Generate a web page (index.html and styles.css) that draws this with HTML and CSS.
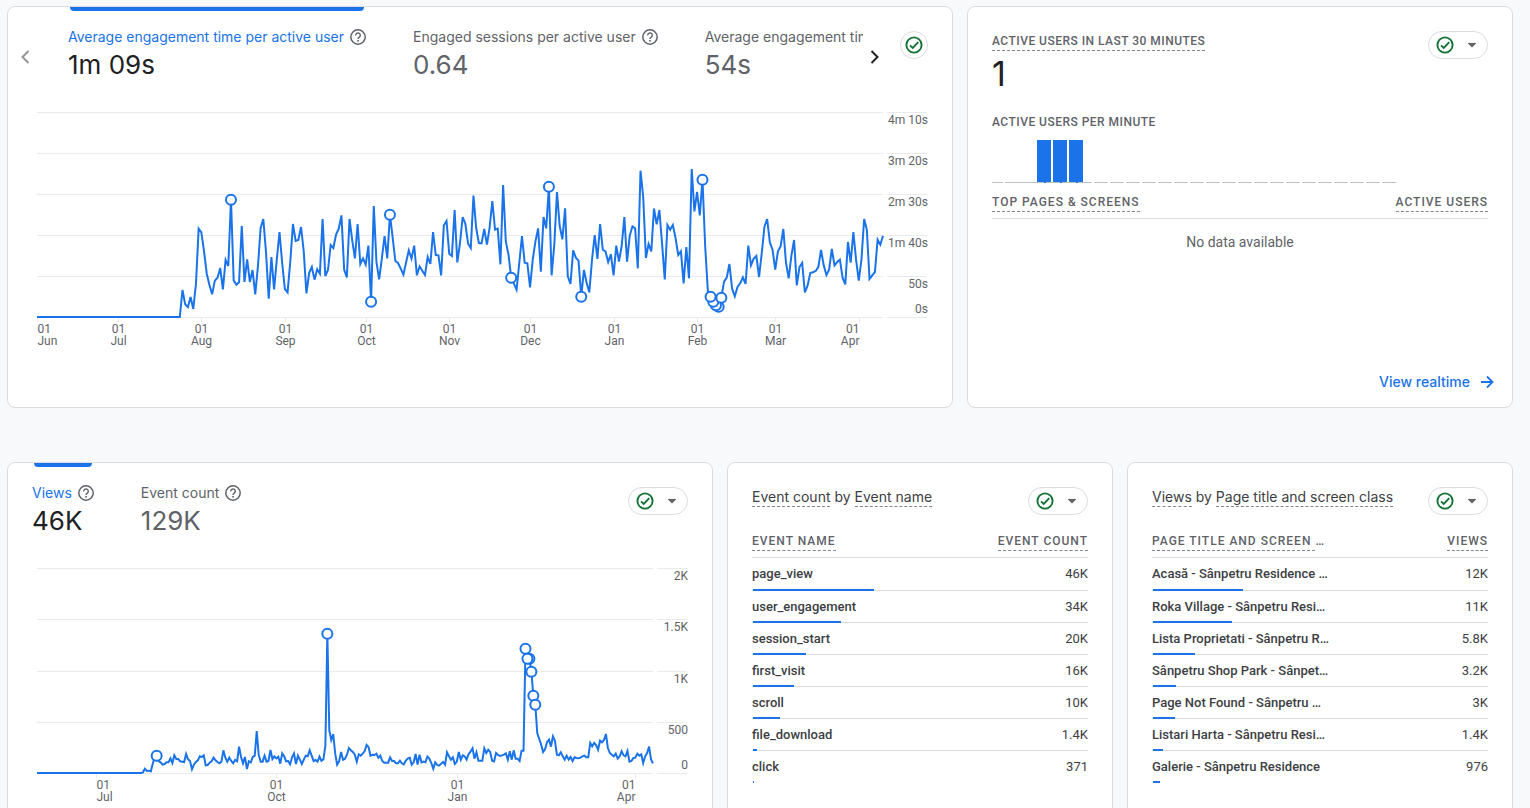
FILE: index.html
```html
<!DOCTYPE html>
<html lang="en">
<head>
    <meta charset="UTF-8">
    <meta name="viewport" content="width=device-width, initial-scale=1.0">
    <title>Analytics Home</title>
    <link rel="stylesheet" href="styles.css">
</head>
<body>

    <!-- shared icons -->
    <svg class="sprite" aria-hidden="true">
        <symbol id="icon-help" viewBox="0 0 16 16">
            <circle cx="8" cy="8" r="7.2" fill="none" stroke="currentColor" stroke-width="1.5"/>
            <path d="M5.7 6.4a2.3 2.3 0 1 1 3.7 1.7C8.6 8.7 8 9 8 10.1" fill="none" stroke="currentColor" stroke-width="1.4"/>
            <rect x="7.2" y="11" width="1.6" height="1.6" fill="currentColor"/>
        </symbol>
        <symbol id="icon-check" viewBox="0 0 18 18">
            <circle cx="9" cy="9" r="7.6" fill="none" stroke="currentColor" stroke-width="1.9"/>
            <path d="M5 9.4l2.7 2.6 5.6-5.8" fill="none" stroke="currentColor" stroke-width="1.9"/>
        </symbol>
        <symbol id="icon-caret" viewBox="0 0 10 5">
            <path d="M0.5 0h9L5 4.5z" fill="currentColor"/>
        </symbol>
        <symbol id="icon-prev" viewBox="0 0 10 14">
            <path d="M8.5 1L2.5 7l6 6" fill="none" stroke="currentColor" stroke-width="2"/>
        </symbol>
        <symbol id="icon-next" viewBox="0 0 10 14">
            <path d="M1.5 1l6 6-6 6" fill="none" stroke="currentColor" stroke-width="2"/>
        </symbol>
        <symbol id="icon-arrow" viewBox="0 0 14 14">
            <path d="M1 7h11M7 1.5L12.5 7 7 12.5" fill="none" stroke="currentColor" stroke-width="1.8"/>
        </symbol>
    </svg>

    <main class="dashboard">

        <section class="card card-engagement">
            <div class="card-top">
                <button class="scroll-btn prev" aria-label="Previous metrics" disabled><svg width="10" height="14"><use href="#icon-prev"/></svg></button>
                <div class="tabs">
                    <button class="tab active">
                        <span class="tab-label">Average engagement time per active user <svg class="help" width="16" height="16"><use href="#icon-help"/></svg></span>
                        <span class="tab-value">1m 09s</span>
                    </button>
                    <button class="tab">
                        <span class="tab-label">Engaged sessions per active user <svg class="help" width="16" height="16"><use href="#icon-help"/></svg></span>
                        <span class="tab-value">0.64</span>
                    </button>
                    <button class="tab">
                        <span class="tab-label">Average engagement time per session <svg class="help" width="16" height="16"><use href="#icon-help"/></svg></span>
                        <span class="tab-value">54s</span>
                    </button>
                </div>
                <button class="scroll-btn next" aria-label="Next metrics"><svg width="10" height="14"><use href="#icon-next"/></svg></button>
                <button class="status-btn round" aria-label="Data quality"><svg width="18" height="18"><use href="#icon-check"/></svg></button>
            </div>
            <svg class="chart" id="engagement-chart"></svg>
        </section>

        <section class="card card-realtime">
            <div class="card-head">
                <h2 class="overline"><span class="dashed">Active users in last 30 minutes</span></h2>
                <button class="status-btn" aria-label="Data quality"><svg width="18" height="18"><use href="#icon-check"/></svg><svg class="caret" width="10" height="5"><use href="#icon-caret"/></svg></button>
            </div>
            <div class="realtime-value">1</div>
            <h3 class="overline">Active users per minute</h3>
            <svg class="minutes" id="minutes-chart" width="405" height="44"></svg>
            <table class="data-table realtime-table">
                <thead>
                    <tr>
                        <th scope="col"><span class="dashed">Top pages &amp; screens</span></th>
                        <th scope="col"><span class="dashed">Active users</span></th>
                    </tr>
                </thead>
                <tbody>
                    <tr><td class="empty" colspan="2">No data available</td></tr>
                </tbody>
            </table>
            <a class="card-link" href="#">View realtime <svg width="14" height="14"><use href="#icon-arrow"/></svg></a>
        </section>

        <section class="card card-views">
            <div class="card-top">
                <div class="tabs">
                    <button class="tab active">
                        <span class="tab-label">Views <svg class="help" width="16" height="16"><use href="#icon-help"/></svg></span>
                        <span class="tab-value">46K</span>
                    </button>
                    <button class="tab">
                        <span class="tab-label">Event count <svg class="help" width="16" height="16"><use href="#icon-help"/></svg></span>
                        <span class="tab-value">129K</span>
                    </button>
                </div>
                <button class="status-btn" aria-label="Data quality"><svg width="18" height="18"><use href="#icon-check"/></svg><svg class="caret" width="10" height="5"><use href="#icon-caret"/></svg></button>
            </div>
            <svg class="chart" id="views-chart"></svg>
        </section>

        <section class="card card-list">
            <div class="card-head">
                <h2 class="card-title"><span class="dashed">Event count</span> by <span class="dashed">Event name</span></h2>
                <button class="status-btn" aria-label="Data quality"><svg width="18" height="18"><use href="#icon-check"/></svg><svg class="caret" width="10" height="5"><use href="#icon-caret"/></svg></button>
            </div>
            <table class="data-table">
                <thead>
                    <tr>
                        <th scope="col"><span class="dashed">Event name</span></th>
                        <th scope="col"><span class="dashed">Event count</span></th>
                    </tr>
                </thead>
                <tbody>
                    <tr><td>page_view<span class="bar" style="width: 36%"></span></td><td>46K</td></tr>
                    <tr><td>user_engagement<span class="bar" style="width: 26.2%"></span></td><td>34K</td></tr>
                    <tr><td>session_start<span class="bar" style="width: 15.8%"></span></td><td>20K</td></tr>
                    <tr><td>first_visit<span class="bar" style="width: 12.2%"></span></td><td>16K</td></tr>
                    <tr><td>scroll<span class="bar" style="width: 8%"></span></td><td>10K</td></tr>
                    <tr><td>file_download<span class="bar" style="width: 1.2%"></span></td><td>1.4K</td></tr>
                    <tr><td>click<span class="bar" style="width: 0.3%"></span></td><td>371</td></tr>
                </tbody>
            </table>
        </section>

        <section class="card card-list">
            <div class="card-head">
                <h2 class="card-title"><span class="dashed">Views</span> by <span class="dashed">Page title and screen class</span></h2>
                <button class="status-btn" aria-label="Data quality"><svg width="18" height="18"><use href="#icon-check"/></svg><svg class="caret" width="10" height="5"><use href="#icon-caret"/></svg></button>
            </div>
            <table class="data-table">
                <thead>
                    <tr>
                        <th scope="col"><span class="dashed">Page title and screen&nbsp;</span>…</th>
                        <th scope="col"><span class="dashed">Views</span></th>
                    </tr>
                </thead>
                <tbody>
                    <tr><td>Acasă - Sânpetru Residence …<span class="bar" style="width: 26.8%"></span></td><td>12K</td></tr>
                    <tr><td>Roka Village - Sânpetru Resi…<span class="bar" style="width: 23.5%"></span></td><td>11K</td></tr>
                    <tr><td>Lista Proprietati - Sânpetru R…<span class="bar" style="width: 12.5%"></span></td><td>5.8K</td></tr>
                    <tr><td>Sânpetru Shop Park - Sânpet…<span class="bar" style="width: 6.9%"></span></td><td>3.2K</td></tr>
                    <tr><td>Page Not Found - Sânpetru …<span class="bar" style="width: 6.5%"></span></td><td>3K</td></tr>
                    <tr><td>Listari Harta - Sânpetru Resi…<span class="bar" style="width: 3%"></span></td><td>1.4K</td></tr>
                    <tr><td>Galerie - Sânpetru Residence<span class="bar" style="width: 2.1%"></span></td><td>976</td></tr>
                </tbody>
            </table>
        </section>

    </main>

    <script src="charts.js"></script>
</body>
</html>
```
FILE: styles.css
```css
* {
    box-sizing: border-box;
}

body {
    margin: 0;
    height: 100vh;
    overflow: hidden;
    background-color: #f8f9fa;
    color: #202124;
    font-family: Roboto, "Liberation Sans", sans-serif;
}

button {
    font: inherit;
    color: inherit;
    background: none;
    border: none;
    padding: 0;
    cursor: pointer;
}

svg {
    display: block;
    flex: none;
}

.sprite {
    position: absolute;
    width: 0;
    height: 0;
}

.dashboard {
    display: grid;
    grid-template-columns: repeat(19, minmax(0, 1fr));
    column-gap: 14px;
    row-gap: 54px;
    height: 100%;
    padding: 6px 17px 0 7px;
    overflow: hidden auto;
    scrollbar-width: none;
}

.card {
    display: flex;
    flex-direction: column;
    min-height: 402px;
    padding: 0 24px;
    background-color: #fff;
    border: 1px solid #dadce0;
    border-radius: 8px;
}

.card-engagement {
    grid-column: span 12;
}

.card-realtime {
    grid-column: span 7;
}

.card-views {
    grid-column: span 9;
}

.card-list {
    grid-column: span 5;
}

/* metric tabs */
.card-top {
    display: flex;
    align-items: flex-start;
    height: 97px;
}

.tabs {
    display: flex;
    flex: 1;
    gap: 47px;
    overflow: hidden;
}

.tab {
    position: relative;
    flex: none;
    padding: 21px 0 0;
    color: #5f6368;
    font-family: "Google Sans", Inter, sans-serif;
    text-align: left;
}

.tab-label {
    display: flex;
    align-items: center;
    gap: 6px;
    font-size: 14px;
    line-height: 18px;
    white-space: nowrap;
}

.tab-value {
    display: block;
    font-size: 26px;
    line-height: 38px;
}

.tab.active {
    color: #202124;
}

.tab.active::before {
    content: "";
    position: absolute;
    top: 0;
    left: 2px;
    right: 2px;
    height: 4px;
    background-color: #1a73e8;
    border-radius: 0 0 4px 4px;
}

.tab.active .tab-label {
    color: #1a73e8;
}

.tab .help {
    color: #5f6368;
}

.scroll-btn {
    margin-top: 43px;
}

.scroll-btn.prev {
    margin-left: -12px;
    margin-right: 38px;
    color: #949699;
}

.scroll-btn.next {
    margin-left: 7px;
    margin-right: 20px;
    color: #202124;
}

.status-btn {
    display: flex;
    align-items: center;
    gap: 12px;
    flex: none;
    width: 60px;
    height: 28px;
    margin-top: 24px;
    padding-left: 7px;
    border: 1px solid #dadce0;
    border-radius: 14px;
    color: #137333;
}

.status-btn.round {
    justify-content: center;
    width: 28px;
    padding: 0;
}

.caret {
    margin-left: 1px;
    color: #5f6368;
}

/* line charts */
.chart {
    width: 100%;
    height: 260px;
    overflow: visible;
}

.chart text {
    fill: #5f6368;
    font-size: 12px;
}

.chart .grid {
    stroke: #e8eaed;
    stroke-width: 1;
}

.chart .series {
    fill: none;
    stroke: #1a73e8;
    stroke-width: 2;
}

.chart .marker {
    fill: #fff;
    stroke: #1a73e8;
    stroke-width: 2;
}

/* card headings */
.card-head {
    display: flex;
    justify-content: space-between;
    align-items: flex-start;
}

.card-title {
    margin: 25px 0 0;
    color: #3c4043;
    font-family: "Google Sans", Inter, sans-serif;
    font-size: 14px;
    font-weight: 400;
    line-height: 18px;
}

.overline {
    margin: 0;
    color: #5f6368;
    font-size: 12px;
    font-weight: 500;
    letter-spacing: 0.04em;
    line-height: 18px;
    text-transform: uppercase;
}

.card-head .overline {
    margin-top: 25px;
}

.dashed {
    display: inline-block;
    border-bottom: 1px dashed #80868b;
}

.realtime-value {
    margin-top: -5px;
    font-family: "Google Sans", Inter, sans-serif;
    font-size: 34px;
    line-height: 40px;
}

.realtime-value + .overline {
    margin-top: 19px;
}

.minutes {
    margin-top: 9px;
}

/* tables */
.data-table {
    width: 100%;
    margin-top: 17px;
    border-collapse: separate;
    border-spacing: 0;
}

.data-table tr {
    position: relative;
}

.data-table th {
    padding: 0 0 6px;
    border-bottom: 1px solid #dadce0;
    color: #5f6368;
    font-size: 12px;
    font-weight: 500;
    letter-spacing: 1px;
    line-height: 18px;
    text-align: left;
    text-transform: uppercase;
    white-space: nowrap;
}

.data-table td {
    height: 32px;
    padding: 0 0 1px;
    border-bottom: 1px solid #dadce0;
    color: #3c4043;
    font-size: 13px;
    font-weight: 500;
    white-space: nowrap;
}

.data-table tbody tr:first-child td {
    height: 33px;
}

.data-table th:last-child,
.data-table td:last-child {
    text-align: right;
}

.data-table td:last-child {
    font-weight: 400;
}

.data-table tbody tr:last-child td {
    border-bottom-color: transparent;
}

.bar {
    position: absolute;
    left: 1px;
    bottom: 0;
    height: 2px;
    background-color: #1a73e8;
}

.realtime-table {
    margin-top: 9px;
}

.realtime-table tbody tr:first-child .empty {
    height: 48px;
    color: #5f6368;
    font-size: 14px;
    text-align: center;
}

.card-link {
    display: flex;
    align-items: center;
    gap: 10px;
    align-self: flex-end;
    margin-top: auto;
    margin-right: -6px;
    margin-bottom: 16px;
    color: #1a73e8;
    font-family: "Google Sans", Inter, sans-serif;
    font-size: 14px;
    font-weight: 500;
    line-height: 18px;
    text-decoration: none;
}
```
FILE: charts.js
```js
const SVG_NS = 'http://www.w3.org/2000/svg';
const LAST_DAY = 314;
const FULL_SCALE = 615;
const PLOT_HEIGHT = 205;

// one value per day from 1 June, after the empty days at the start
const engagement = [
    0, 81, 38, 30, 60, 24, 99, 265, 254, 197, 130, 96, 68, 109, 118, 147, 83, 171, 153, 352,
    110, 97, 104, 273, 105, 173, 105, 141, 68, 152, 267, 294, 194, 55, 180, 83, 172, 255, 162, 84,
    74, 165, 279, 228, 231, 270, 197, 71, 132, 150, 112, 143, 130, 294, 123, 141, 216, 207, 247, 265,
    305, 142, 119, 294, 230, 176, 279, 159, 176, 157, 214, 46, 333, 164, 113, 176, 243, 176, 307, 239,
    168, 162, 145, 127, 164, 200, 175, 214, 125, 152, 139, 126, 180, 159, 255, 186, 185, 125, 275, 288,
    190, 183, 321, 164, 222, 300, 279, 220, 207, 364, 267, 222, 221, 264, 217, 269, 348, 262, 265, 158,
    396, 227, 187, 118, 100, 82, 162, 243, 163, 161, 89, 172, 227, 266, 136, 300, 266, 391, 125, 217,
    375, 273, 233, 326, 122, 99, 200, 178, 169, 61, 141, 102, 74, 172, 246, 174, 279, 202, 197, 165,
    188, 125, 214, 166, 213, 300, 166, 244, 272, 266, 146, 439, 360, 177, 219, 197, 325, 278, 321, 220,
    113, 276, 262, 276, 237, 186, 197, 101, 210, 116, 444, 317, 375, 305, 412, 212, 77, 61, 46, 35,
    31, 58, 106, 118, 159, 85, 62, 90, 101, 119, 99, 214, 155, 175, 183, 120, 192, 271, 294, 224,
    202, 142, 197, 212, 264, 162, 116, 184, 231, 95, 150, 162, 74, 94, 132, 134, 138, 150, 201, 155,
    126, 142, 204, 155, 165, 172, 118, 98, 225, 163, 255, 172, 109, 172, 294, 262, 114, 125, 135, 232,
    217, 244
];

const views = [
    2, 13, 6, 7, 5, 28, 48, 52, 36, 32, 25, 27, 32, 32, 44, 30, 53, 42, 42, 35,
    34, 33, 57, 41, 36, 11, 25, 33, 38, 50, 48, 53, 23, 24, 31, 35, 46, 38, 33, 29,
    34, 68, 46, 34, 46, 36, 29, 39, 35, 79, 48, 29, 48, 12, 35, 32, 48, 52, 126, 55,
    34, 34, 52, 34, 36, 69, 42, 50, 44, 49, 28, 59, 50, 35, 36, 26, 47, 59, 27, 52,
    40, 27, 40, 52, 50, 68, 52, 36, 39, 34, 49, 36, 41, 82, 418, 128, 99, 117, 58, 25,
    35, 63, 40, 43, 55, 75, 68, 63, 55, 34, 56, 52, 58, 65, 84, 78, 52, 55, 54, 58,
    46, 52, 36, 31, 31, 31, 47, 36, 36, 29, 29, 37, 29, 26, 37, 43, 46, 25, 32, 57,
    25, 55, 32, 34, 32, 49, 43, 30, 13, 32, 24, 22, 28, 33, 25, 62, 50, 40, 47, 27,
    34, 63, 40, 53, 50, 40, 57, 64, 74, 43, 62, 37, 37, 37, 74, 60, 70, 63, 37, 35,
    60, 54, 51, 53, 55, 59, 40, 65, 40, 68, 43, 43, 36, 67, 67, 373, 343, 343, 304, 232,
    205, 120, 102, 85, 63, 72, 93, 100, 79, 110, 97, 55, 53, 62, 50, 40, 52, 40, 48, 36,
    47, 45, 44, 46, 50, 52, 47, 47, 90, 80, 90, 84, 70, 97, 92, 99, 117, 75, 60, 55,
    50, 58, 43, 50, 65, 53, 50, 66, 34, 36, 45, 46, 58, 52, 56, 30, 50, 60, 79, 41,
    29
];

function add(parent, name, attrs, text) {
    const node = document.createElementNS(SVG_NS, name);
    for (const key in attrs) {
        node.setAttribute(key, attrs[key]);
    }
    if (text) {
        node.textContent = text;
    }
    parent.appendChild(node);
    return node;
}

function drawChart(id, options) {
    const svg = document.getElementById(id);
    svg.innerHTML = '';
    const width = svg.clientWidth;
    const left = 5;
    const top = 8;
    const right = width - options.axisWidth - 5;
    const base = top + PLOT_HEIGHT;
    const dayX = day => left + day * (right - left) / LAST_DAY;
    const valueY = value => base - value * PLOT_HEIGHT / FULL_SCALE;

    options.yLabels.forEach((label, i) => {
        const y = Math.round(top + i * PLOT_HEIGHT / (options.yLabels.length - 1)) + 0.5;
        const last = i === options.yLabels.length - 1;
        add(svg, 'line', { class: 'grid', x1: left, x2: right, y1: y, y2: y });
        add(svg, 'line', { class: 'grid', x1: right + 4, x2: width - 1, y1: y, y2: y });
        add(svg, 'text', { x: width, y: last ? y - 5 : y + 11, 'text-anchor': 'end' }, label);
    });

    options.xLabels.forEach(([day, month, anchor]) => {
        const x = Math.round(dayX(day)) + 0.5;
        add(svg, 'line', { class: 'grid', x1: x, x2: x, y1: base, y2: base + 5 });
        add(svg, 'text', { x: x, y: base + 16, 'text-anchor': anchor || 'middle' }, '01');
        add(svg, 'text', { x: x, y: base + 28, 'text-anchor': anchor || 'middle' }, month);
    });

    const padding = LAST_DAY + 1 - options.data.length;
    const values = new Array(padding).fill(0).concat(options.data);
    const points = values.map((value, day) => dayX(day) + ',' + valueY(value)).join(' ');
    add(svg, 'polyline', { class: 'series', points: points });

    options.markers.forEach(day => {
        add(svg, 'circle', { class: 'marker', cx: dayX(day), cy: valueY(values[day]), r: 5 });
    });
}

function drawMinutes() {
    const svg = document.getElementById('minutes-chart');
    add(svg, 'path', { d: 'M0 42.5h11M13 42.5h87', stroke: '#bdc1c6' });
    for (let x = 102; x < 400; x += 16) {
        add(svg, 'path', { d: 'M' + x + ' 42.5h14', stroke: '#bdc1c6' });
    }
    [45, 61, 77].forEach(x => {
        add(svg, 'rect', { x: x, y: 0, width: 14, height: 42, fill: '#1a73e8' });
        add(svg, 'rect', { x: x + 7, y: 42, width: 2, height: 1, fill: '#1a73e8' });
    });
}

function drawAll() {
    drawChart('engagement-chart', {
        data: engagement,
        axisWidth: 40,
        yLabels: ['4m 10s', '3m 20s', '2m 30s', '1m 40s', '50s', '0s'],
        xLabels: [[0, 'Jun', 'start'], [30, 'Jul'], [61, 'Aug'], [92, 'Sep'], [122, 'Oct'], [153, 'Nov'],
            [183, 'Dec'], [214, 'Jan'], [245, 'Feb'], [274, 'Mar'], [305, 'Apr', 'end']],
        markers: [72, 124, 131, 176, 190, 202, 247, 253, 252, 251, 250, 254]
    });
    drawChart('views-chart', {
        data: views,
        axisWidth: 30,
        yLabels: ['2K', '1.5K', '1K', '500', '0'],
        xLabels: [[30, 'Jul', 'start'], [122, 'Oct'], [214, 'Jan'], [305, 'Apr', 'end']],
        markers: [61, 148, 249, 251, 250, 252, 253, 254]
    });
}

drawMinutes();
drawAll();
window.addEventListener('resize', drawAll);
```
